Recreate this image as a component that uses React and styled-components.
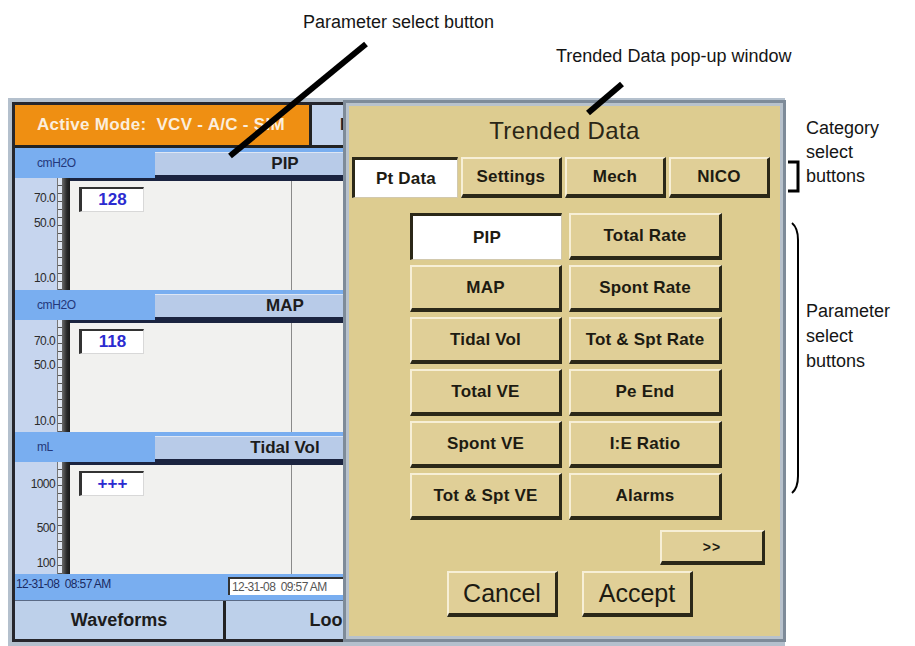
import React from "react";
import styled, { createGlobalStyle, css } from "styled-components";

// global page setup

const GlobalStyle = createGlobalStyle`
  html, body {
    margin: 0;
    padding: 0;
    width: 915px;
    height: 646px;
    overflow: hidden;
    background: #ffffff;
    font-family: "Liberation Sans", Arial, sans-serif;
  }
  * { box-sizing: border-box; }
`;

const Page = styled.div`
  position: relative;
  width: 915px;
  height: 646px;
  padding: 98px 0 0 8px;
`;

// ventilator screen

const Screen = styled.div`
  width: 777px;
  height: 548px;
  border: 4px solid #b4c0cd;
`;

const ScreenInner = styled.div`
  height: 100%;
  border: 3px solid #26262c;
  display: flex;
  flex-direction: column;
  overflow: hidden;
  background: #f1f1ef;
`;

const HeaderRow = styled.div`
  display: flex;
  height: 43px;
  border-bottom: 3px solid #222;
  background: #c3d3ec;
`;

const ModeBox = styled.div`
  width: 297px;
  background: #ef8f12;
  border-right: 3px solid #222;
  color: #fbeedd;
  font-weight: bold;
  font-size: 17px;
  letter-spacing: 0.3px;
  display: flex;
  align-items: center;
  padding-left: 22px;
  white-space: pre;
`;

const HeaderTab = styled.div`
  width: 220px;
  display: flex;
  align-items: center;
  padding-left: 28px;
  font-weight: bold;
  font-size: 16px;
  color: #222;
`;

const Section = styled.div`
  display: flex;
  flex-direction: column;
  height: 142px;
`;

const SectionHead = styled.div`
  display: flex;
  height: 30px;
  background: #79aef0;
`;

const Unit = styled.div`
  width: 140px;
  padding-left: 22px;
  display: flex;
  align-items: center;
  font-size: 12px;
  letter-spacing: -0.4px;
  color: #23387a;
`;

const ParamSelect = styled.div`
  width: 260px;
  margin-top: 4px;
  background: #b8cbe8;
  border-top: 1px solid #dde6f4;
  border-bottom: 3px solid #1b2440;
  display: flex;
  align-items: center;
  justify-content: center;
  font-weight: bold;
  font-size: 17px;
  color: #1c1c1c;
`;

const HeadFill = styled.div`
  flex: 1;
  margin-top: 4px;
  background: #b8cbe8;
  border-bottom: 3px solid #1b2440;
`;

const Chart = styled.div`
  display: flex;
  flex: 1;
`;

const Axis = styled.div`
  position: relative;
  width: 42px;
  background: #c6d5ee;
`;

const AxisLabel = styled.span`
  position: absolute;
  right: 2px;
  font-size: 12px;
  line-height: 14px;
  letter-spacing: -0.6px;
  color: #2b2b2b;
`;

const TickBar = styled.div`
  width: 5px;
  background: repeating-linear-gradient(
    to bottom,
    #dfe6f2 0px,
    #dfe6f2 7px,
    #555 7px,
    #555 8px
  );
  border-left: 1px solid #777;
`;

const DarkBar = styled.div`
  width: 8px;
  background: linear-gradient(to right, #6b6b6b, #2a2a2a 60%, #1a1a1a);
`;

const Plot = styled.div`
  flex: 1;
  border-top: 3px solid #1b2440;
  padding: 6px 0 0 9px;
  background:
    linear-gradient(
      to right,
      transparent 221px,
      #8a8a8a 221px,
      #8a8a8a 222px,
      transparent 222px
    ),
    #f1f1ef;
`;

const ValueBox = styled.div`
  width: 65px;
  height: 25px;
  background: #ffffff;
  border-left: 3px solid #333;
  border-top: 2px solid #333;
  border-right: 1px solid #d8d8d8;
  border-bottom: 1px solid #d8d8d8;
  display: flex;
  align-items: center;
  justify-content: center;
  color: #2b2bd0;
  font-weight: bold;
  font-size: 17px;
`;

const StampRow = styled.div`
  display: flex;
  height: 26px;
  background: #79aef0;
`;

const StampLeft = styled.div`
  width: 212px;
  padding: 3px 0 0 1px;
  font-size: 12px;
  letter-spacing: -0.6px;
  color: #1a2a62;
  white-space: pre;
`;

const StampBox = styled.div`
  width: 220px;
  margin: 3px 0 5px 1px;
  padding-left: 2px;
  background: #ffffff;
  border-top: 2px solid #333;
  border-left: 2px solid #333;
  font-size: 12px;
  letter-spacing: -0.6px;
  color: #555;
  white-space: pre;
  display: flex;
  align-items: center;
`;

const BottomRow = styled.div`
  display: flex;
  flex: 1;
  border-top: 1px solid #5a6a86;
`;

const BottomBtn = styled.div`
  width: ${(p) => p.$w}px;
  background: #bdd0ea;
  border-right: 3px solid #222;
  display: flex;
  align-items: center;
  justify-content: center;
  font-weight: bold;
  font-size: 18px;
  color: #1c1c1c;
`;

// trended data pop-up

const Popup = styled.div`
  position: absolute;
  left: 343px;
  top: 100px;
  width: 443px;
  height: 542px;
  border: 3px solid #7e8b99;
  box-shadow: inset 0 0 0 3px #b8c2cc;
  background: #ddcc90;
  padding: 6px;
  display: flex;
  flex-direction: column;
  z-index: 1;
`;

const Title = styled.div`
  margin-top: 8px;
  text-align: center;
  font-size: 24px;
  letter-spacing: 0.4px;
  line-height: 28px;
  color: #2a2616;
`;

const raised = css`
  background: #e0cf97;
  border-top: 2px solid #f7efd6;
  border-left: 2px solid #f7efd6;
  border-right: 3px solid #2b2818;
  border-bottom: 4px solid #2b2818;
`;

const pressed = css`
  background: #ffffff;
  border-top: 3px solid #2b2818;
  border-left: 3px solid #2b2818;
  border-right: 1px solid #d2c9ae;
  border-bottom: 1px solid #d2c9ae;
`;

const TanButton = styled.div`
  ${(p) => (p.$active ? pressed : raised)}
  display: flex;
  align-items: center;
  justify-content: center;
  font-weight: bold;
  font-size: 17px;
  letter-spacing: 0.2px;
  color: #1d1b12;
  white-space: nowrap;
`;

const TabRow = styled.div`
  display: flex;
  gap: 3px;
  height: 41px;
  margin: 12px 7px 0 0;
`;

const Tab = styled(TanButton)`
  flex: ${(p) => (p.$wide ? 1.06 : 1)};
`;

const ParamGrid = styled.div`
  display: grid;
  grid-template-columns: 152px 153px;
  grid-auto-rows: 47px;
  gap: 5px 7px;
  margin: 15px 0 0 58px;
`;

const MoreBtn = styled(TanButton)`
  width: 105px;
  height: 35px;
  margin: 10px 0 0 308px;
  font-size: 14px;
  letter-spacing: 1px;
`;

const ActionRow = styled.div`
  display: flex;
  gap: 24px;
  margin: 6px 0 0 95px;
`;

const ActionBtn = styled(TanButton)`
  width: 111px;
  height: 46px;
  font-weight: normal;
  font-size: 25px;
  letter-spacing: 0;
`;

// annotations

const Overlay = styled.svg`
  position: absolute;
  left: 0;
  top: 0;
  z-index: 2;
  pointer-events: none;
`;

const Note = styled.div`
  position: absolute;
  left: ${(p) => p.$x}px;
  top: ${(p) => p.$y}px;
  font-size: 18px;
  line-height: ${(p) => p.$lh || 22}px;
  color: #151515;
  white-space: pre;
  z-index: 2;
`;

const sections = [
  { unit: "cmH2O", name: "PIP", value: "128", ticks: [["70.0", 13], ["50.0", 38], ["10.0", 93]] },
  { unit: "cmH2O", name: "MAP", value: "118", ticks: [["70.0", 14], ["50.0", 38], ["10.0", 94]] },
  { unit: "mL", name: "Tidal Vol", value: "+++", ticks: [["1000", 15], ["500", 59], ["100", 94]] },
];

const params = [
  "PIP", "Total Rate",
  "MAP", "Spont Rate",
  "Tidal Vol", "Tot & Spt Rate",
  "Total VE", "Pe End",
  "Spont VE", "I:E Ratio",
  "Tot & Spt VE", "Alarms",
];

function TrendSection({ data }) {
  return (
    <Section>
      <SectionHead>
        <Unit>{data.unit}</Unit>
        <ParamSelect>{data.name}</ParamSelect>
        <HeadFill />
      </SectionHead>
      <Chart>
        <Axis>
          {data.ticks.map(([label, top]) => (
            <AxisLabel key={label} style={{ top }}>
              {label}
            </AxisLabel>
          ))}
        </Axis>
        <TickBar />
        <DarkBar />
        <Plot>
          <ValueBox>{data.value}</ValueBox>
        </Plot>
      </Chart>
    </Section>
  );
}

export default function App() {
  return (
    <>
      <GlobalStyle />
      <Page>
        <Screen>
          <ScreenInner>
            <HeaderRow>
              <ModeBox>{"Active Mode:  VCV - A/C - SIM"}</ModeBox>
              <HeaderTab>Info</HeaderTab>
            </HeaderRow>
            {sections.map((s) => (
              <TrendSection key={s.name} data={s} />
            ))}
            <StampRow>
              <StampLeft>{"12-31-08  08:57 AM"}</StampLeft>
              <StampBox>{"12-31-08  09:57 AM"}</StampBox>
            </StampRow>
            <BottomRow>
              <BottomBtn $w={211}>Waveforms</BottomBtn>
              <BottomBtn $w={224}>Loops</BottomBtn>
            </BottomRow>
          </ScreenInner>
        </Screen>

        <Popup>
          <Title>Trended Data</Title>
          <TabRow>
            <Tab $active $wide>Pt Data</Tab>
            <Tab>Settings</Tab>
            <Tab>Mech</Tab>
            <Tab>NICO</Tab>
          </TabRow>
          <ParamGrid>
            {params.map((p, i) => (
              <TanButton key={p} $active={i === 0}>
                {p}
              </TanButton>
            ))}
          </ParamGrid>
          <MoreBtn>&gt;&gt;</MoreBtn>
          <ActionRow>
            <ActionBtn>Cancel</ActionBtn>
            <ActionBtn>Accept</ActionBtn>
          </ActionRow>
        </Popup>

        <Note $x={303} $y={11}>Parameter select button</Note>
        <Note $x={556} $y={45}>Trended Data pop-up window</Note>
        <Note $x={806} $y={116} $lh={24}>{"Category\nselect\nbuttons"}</Note>
        <Note $x={806} $y={299} $lh={25}>{"Parameter\nselect\nbuttons"}</Note>

        <Overlay width="915" height="646" viewBox="0 0 915 646">
          <line x1="366" y1="44" x2="230" y2="156" stroke="#000" strokeWidth="6" />
          <line x1="622" y1="84" x2="588" y2="113" stroke="#000" strokeWidth="6" />
          <path d="M788 162 H798 V191 H788" fill="none" stroke="#000" strokeWidth="3" />
          <path
            d="M792 223 Q798 228 798 240 V476 Q798 488 792 493"
            fill="none"
            stroke="#000"
            strokeWidth="2"
          />
        </Overlay>
      </Page>
    </>
  );
}
